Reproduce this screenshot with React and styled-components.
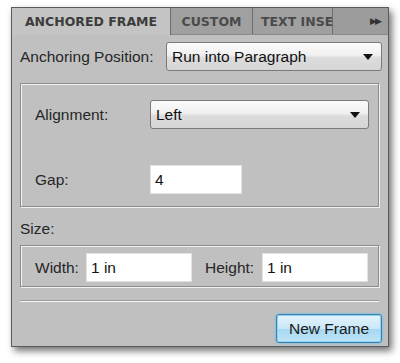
import React from 'react';
import styled, { createGlobalStyle } from 'styled-components';

const GlobalStyle = createGlobalStyle`
  html, body {
    margin: 0;
    background: #ffffff;
  }
  body {
    font-family: 'Liberation Sans', Arial, sans-serif;
    color: #1e1e1e;
  }
`;

const Page = styled.div`
  width: 400px;
  height: 363px;
  padding: 7px 0 0 11px;
  box-sizing: border-box;
`;

const Panel = styled.div`
  width: 378px;
  height: 340px;
  box-sizing: border-box;
  border: 1px solid #5a5a5a;
  background: #c0c0c0;
  box-shadow: 3px 4px 7px rgba(0, 0, 0, 0.55);
  display: flex;
  flex-direction: column;
`;

const TabBar = styled.div`
  display: flex;
  height: 26px;
  background: #9c9c9c;
  border-bottom: 1px solid #8a8a8a;
`;

const Tab = styled.div`
  display: flex;
  align-items: center;
  width: ${(p) => p.w}px;
  flex: none;
  overflow: hidden;
  white-space: nowrap;
  font-family: Tahoma, 'DejaVu Sans', sans-serif;
  font-weight: bold;
  font-size: 12.5px;
  color: ${(p) => (p.active ? '#3c3c3c' : '#4a4a4a')};
  background: ${(p) => (p.active ? '#c4c4c4' : '#a0a0a0')};
  border-right: 1px solid #6c6c6c;
  box-sizing: border-box;
  margin-bottom: ${(p) => (p.active ? '-1px' : '0')};
  justify-content: ${(p) => (p.clip ? 'flex-start' : 'center')};
  padding-left: ${(p) => (p.clip ? '8px' : '0')};
`;

const TabFill = styled.div`
  flex: 1;
  display: flex;
  align-items: center;
  justify-content: flex-end;
  padding-right: 8px;
  font-size: 9px;
  color: #333;
  letter-spacing: -2px;
`;

const Body = styled.div`
  flex: 1;
  display: flex;
  flex-direction: column;
  padding: 7px 6px 0 8px;
`;

const Row = styled.div`
  display: flex;
  align-items: center;
  margin-top: ${(p) => p.mt || 0}px;
`;

const Label = styled.span`
  font-size: 15.5px;
  color: #262626;
  width: ${(p) => (p.w ? `${p.w}px` : 'auto')};
  margin-top: ${(p) => p.mt || 0}px;
  margin-left: ${(p) => p.ml || 0}px;
  flex: none;
`;

const Select = styled.div`
  flex: 1;
  height: 29px;
  box-sizing: border-box;
  border: 1px solid #7a7a7a;
  border-radius: 3px;
  background: linear-gradient(#fbfbfb 0%, #f0f0f0 45%, #dcdcdc 55%, #d6d6d6 100%);
  display: flex;
  align-items: center;
  justify-content: space-between;
  padding: 0 8px 0 5px;
  font-size: 15.5px;
  color: #111;
`;

const Arrow = styled.span`
  width: 0;
  height: 0;
  border-left: 5px solid transparent;
  border-right: 5px solid transparent;
  border-top: 6px solid #111;
`;

const Group = styled.div`
  margin-top: ${(p) => p.mt || 0}px;
  margin-right: 3px;
  border: 1px solid #8c8c8c;
  box-shadow: inset 1px 1px 0 #f2f2f2, 1px 1px 0 #f2f2f2;
  display: flex;
  flex-direction: column;
  padding: ${(p) => p.pad};
`;

const Input = styled.div`
  width: ${(p) => p.w}px;
  height: 29px;
  box-sizing: border-box;
  background: #ffffff;
  border: 1px solid #e2e2e2;
  display: flex;
  align-items: center;
  padding-left: 4px;
  font-size: 15.5px;
  color: #111;
`;

const Separator = styled.div`
  margin: 13px 3px 0 0;
  height: 1px;
  background: #9a9a9a;
  box-shadow: 0 1px 0 #f4f4f4;
`;

const Footer = styled.div`
  display: flex;
  justify-content: flex-end;
  margin-top: 13px;
`;

const Button = styled.button`
  width: 106px;
  height: 29px;
  border: 1px solid #3a7fae;
  border-radius: 3px;
  background: linear-gradient(#e6f4fc 0%, #c8e7f8 50%, #a7d8f2 52%, #bfe4f6 100%);
  box-shadow: 0 0 3px #5fc0ef, inset 0 0 0 1px #8fd4f6;
  font-family: 'Liberation Sans', Arial, sans-serif;
  font-size: 15.5px;
  color: #1a1a1a;
  padding: 0;
`;

export default function App() {
  return (
    <>
      <GlobalStyle />
      <Page>
        <Panel>
          <TabBar>
            <Tab active w={159}>ANCHORED FRAME</Tab>
            <Tab w={82}>CUSTOM</Tab>
            <Tab w={80} clip>TEXT INSE</Tab>
            <TabFill>▶▶</TabFill>
          </TabBar>
          <Body>
            <Row>
              <Label w={146}>Anchoring Position:</Label>
              <Select>
                Run into Paragraph
                <Arrow />
              </Select>
            </Row>
            <Group mt={12} pad="16px 9px 12px 14px">
              <Row>
                <Label w={115}>Alignment:</Label>
                <Select>
                  Left
                  <Arrow />
                </Select>
              </Row>
              <Row mt={36}>
                <Label w={115}>Gap:</Label>
                <Input w={92}>4</Input>
              </Row>
            </Group>
            <Label mt={13}>Size:</Label>
            <Group mt={7} pad="7px 9px 4px 14px">
              <Row>
                <Label w={51}>Width:</Label>
                <Input w={106}>1 in</Input>
                <Label w={57} ml={13}>Height:</Label>
                <Input w={106}>1 in</Input>
              </Row>
            </Group>
            <Separator />
            <Footer>
              <Button>New Frame</Button>
            </Footer>
          </Body>
        </Panel>
      </Page>
    </>
  );
}
